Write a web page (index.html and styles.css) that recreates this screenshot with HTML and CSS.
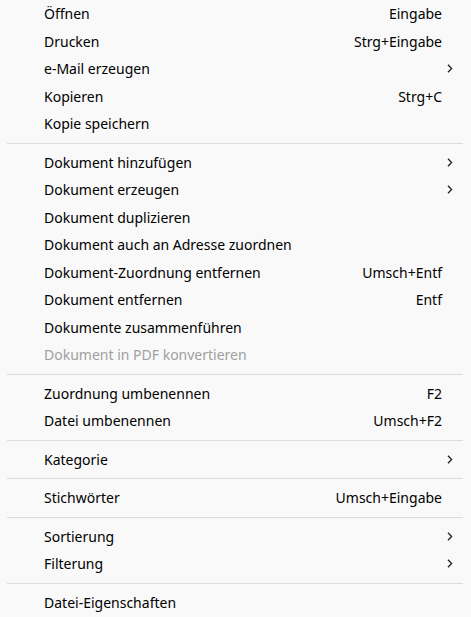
FILE: index.html
```html
<!DOCTYPE html>
<html lang="de">
<head>
<meta charset="utf-8">
<link rel="stylesheet" href="styles.css">
</head>
<body>
<div class="menu">
  <div class="item"><span class="label">Öffnen</span><span class="key">Eingabe</span></div>
  <div class="item"><span class="label">Drucken</span><span class="key">Strg+Eingabe</span></div>
  <div class="item"><span class="label">e-Mail erzeugen</span><span class="arrow"><svg width="6" height="9" viewBox="0 0 6 9"><path d="M1 0.8 L4.6 4.5 L1 8.2" fill="none" stroke="#222" stroke-width="1.3"/></svg></span></div>
  <div class="item"><span class="label">Kopieren</span><span class="key">Strg+C</span></div>
  <div class="item"><span class="label">Kopie speichern</span></div>
  <div class="sep"></div>
  <div class="item"><span class="label">Dokument hinzufügen</span><span class="arrow"><svg width="6" height="9" viewBox="0 0 6 9"><path d="M1 0.8 L4.6 4.5 L1 8.2" fill="none" stroke="#222" stroke-width="1.3"/></svg></span></div>
  <div class="item"><span class="label">Dokument erzeugen</span><span class="arrow"><svg width="6" height="9" viewBox="0 0 6 9"><path d="M1 0.8 L4.6 4.5 L1 8.2" fill="none" stroke="#222" stroke-width="1.3"/></svg></span></div>
  <div class="item"><span class="label">Dokument duplizieren</span></div>
  <div class="item"><span class="label">Dokument auch an Adresse zuordnen</span></div>
  <div class="item"><span class="label">Dokument-Zuordnung entfernen</span><span class="key">Umsch+Entf</span></div>
  <div class="item"><span class="label">Dokument entfernen</span><span class="key">Entf</span></div>
  <div class="item"><span class="label">Dokumente zusammenführen</span></div>
  <div class="item disabled"><span class="label">Dokument in PDF konvertieren</span></div>
  <div class="sep"></div>
  <div class="item"><span class="label">Zuordnung umbenennen</span><span class="key">F2</span></div>
  <div class="item"><span class="label">Datei umbenennen</span><span class="key">Umsch+F2</span></div>
  <div class="sep"></div>
  <div class="item"><span class="label">Kategorie</span><span class="arrow"><svg width="6" height="9" viewBox="0 0 6 9"><path d="M1 0.8 L4.6 4.5 L1 8.2" fill="none" stroke="#222" stroke-width="1.3"/></svg></span></div>
  <div class="sep"></div>
  <div class="item"><span class="label">Stichwörter</span><span class="key">Umsch+Eingabe</span></div>
  <div class="sep"></div>
  <div class="item"><span class="label">Sortierung</span><span class="arrow"><svg width="6" height="9" viewBox="0 0 6 9"><path d="M1 0.8 L4.6 4.5 L1 8.2" fill="none" stroke="#222" stroke-width="1.3"/></svg></span></div>
  <div class="item"><span class="label">Filterung</span><span class="arrow"><svg width="6" height="9" viewBox="0 0 6 9"><path d="M1 0.8 L4.6 4.5 L1 8.2" fill="none" stroke="#222" stroke-width="1.3"/></svg></span></div>
  <div class="sep"></div>
  <div class="item"><span class="label">Datei-Eigenschaften</span></div>
</div>
</body>
</html>
```
FILE: styles.css
```css
html, body {
  margin: 0;
  padding: 0;
  background: #f9f9f9;
}
.menu {
  width: 471px;
  height: 617px;
  background: #f9f9f9;
  font-family: "Noto Sans", sans-serif;
  font-size: 14px;
  color: #000;
  display: flex;
  flex-direction: column;
}
.item {
  height: 27.5px;
  display: flex;
  align-items: center;
  padding-left: 44px;
  padding-right: 29px;
  position: relative;
  white-space: nowrap;
}
.label {
  flex: 1;
}
.key {
  text-align: right;
}
.arrow {
  position: absolute;
  right: 18px;
  top: 0;
  bottom: 0;
  display: flex;
  align-items: center;
}
.arrow svg {
  display: block;
}
.disabled {
  color: #a0a0a0;
}
.sep {
  height: 1px;
  margin: 5px 8px 5px 7px;
  background: #dcdcdc;
  flex: none;
}
```
